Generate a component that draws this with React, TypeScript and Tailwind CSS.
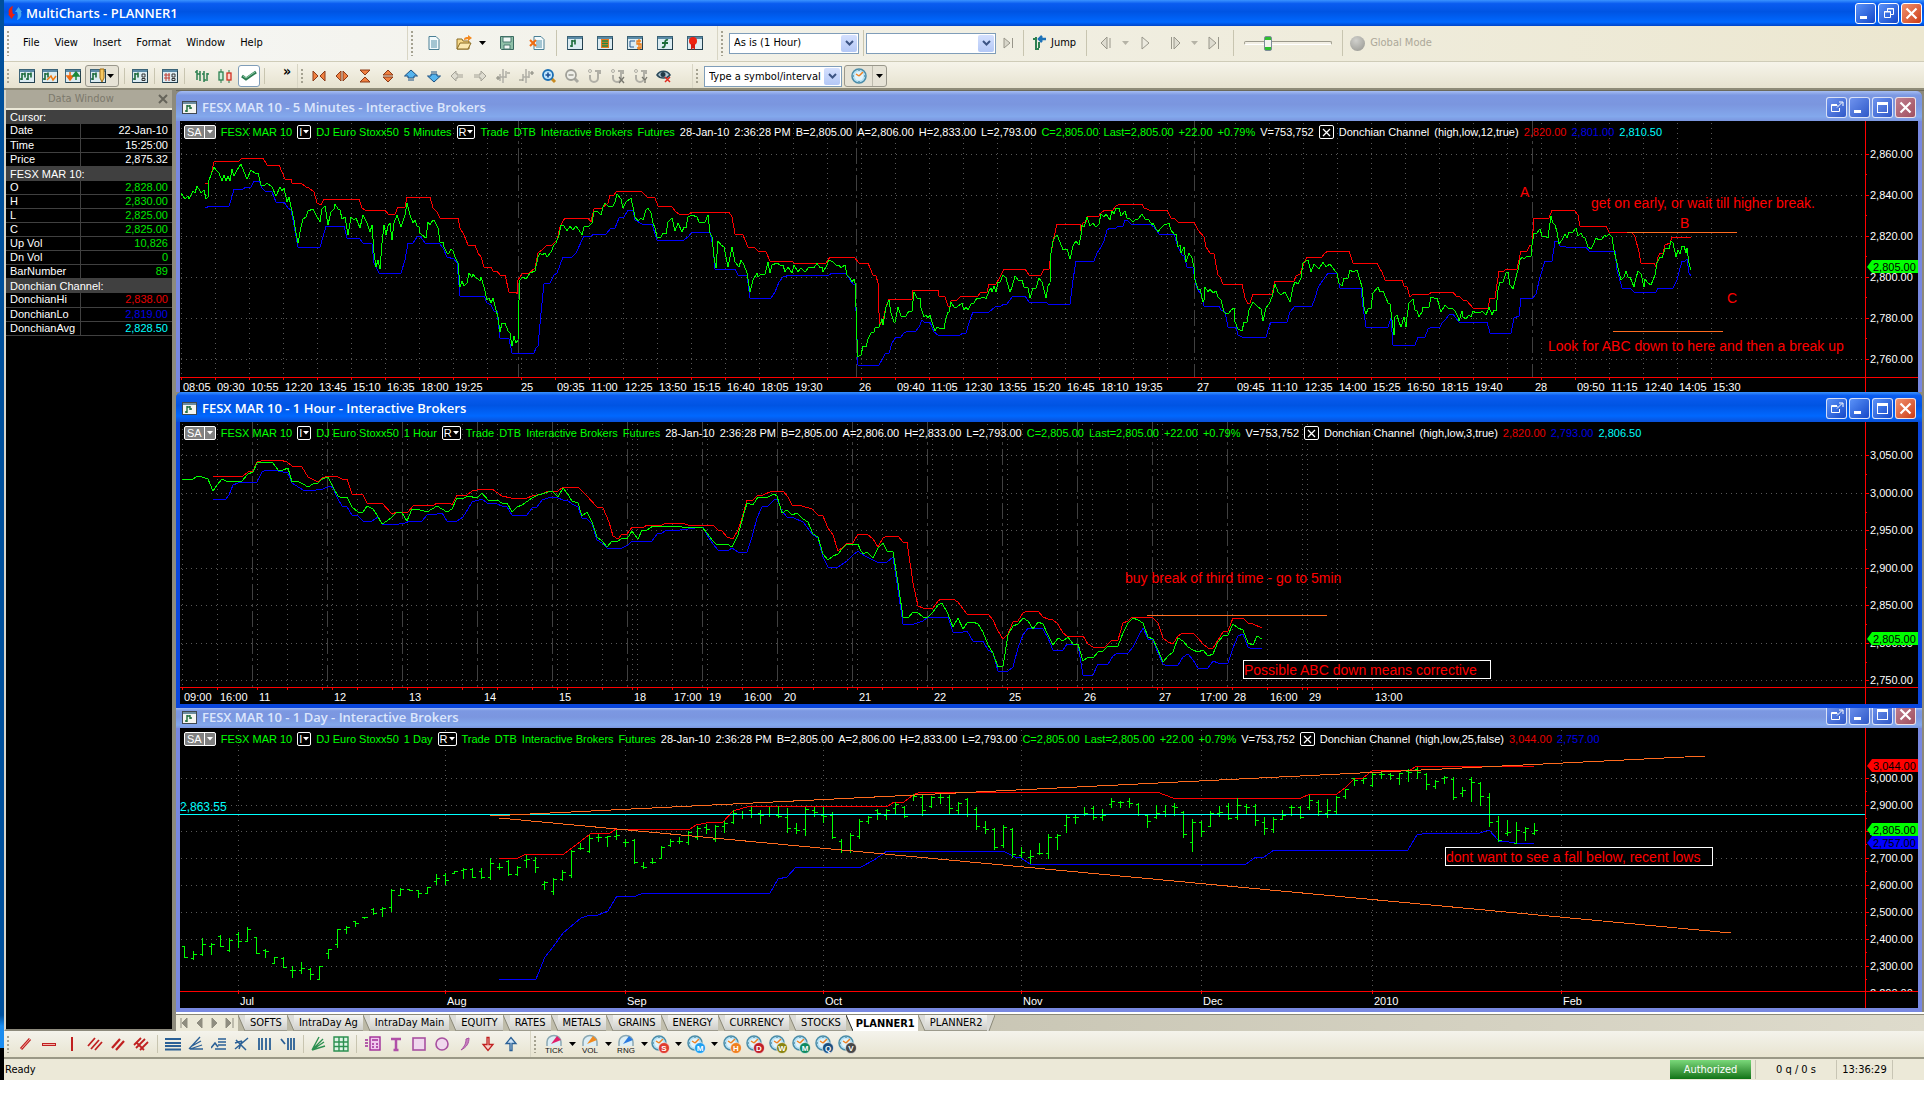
import { Fragment, type ReactNode } from 'react';

const GREEN = '#00ff00';
const RED = '#ff0000';
const BLUE = '#0000ff';
const ORANGE = '#ff6a1e';

/* ---------- chart data ---------- */

// A stretch of a line: origin, horizontal density and its points
type Piece = { x: number; y: number; k: number; pts: string };

const toPath = (pieces: Piece[]) =>
  pieces
    .flatMap((p) => p.pts.split(' ').map((s) => s.split(',').map(Number)).map(([px, py]) => `${Math.round(p.x + px / p.k)},${Math.round(py / 3 - p.y)}`))
    .join(' ');

const m5 = (a: string, b: string, c: string): Piece[] => [
  { x: 0, y: 1, k: 2.24, pts: a },
  { x: 670, y: 1, k: 2.8, pts: b },
  { x: 1200, y: 31, k: 2.882, pts: c },
];

const h1 = (a: string, b: string): Piece[] => [
  { x: 0, y: 32, k: 2.24, pts: a },
  { x: 680, y: 32, k: 2.8, pts: b },
];

const d1 = (a: string, b: string): Piece[] => [
  { x: 0, y: 28, k: 1.96, pts: a },
  { x: 780, y: 28, k: 1.6266, pts: b },
];

const fiveMin = {
  price: m5(
    '3,219 12,238 17,228 21,238 30,213 34,219 39,197 44,213 48,220 53,210 58,238 62,232 65,180 70,165 77,140 81,150 88,160 93,183 98,165 103,183 108,167 111,183 116,148 121,168 128,150 137,131 143,157 149,177 159,150 168,160 174,160 181,195 190,195 196,190 206,200 214,228 223,200 229,214 233,203 240,245 245,232 249,262 255,300 260,340 264,370 271,320 275,298 282,290 287,272 299,266 303,280 313,307 319,266 325,259 331,316 338,277 344,268 348,253 353,268 359,271 364,298 370,290 376,346 384,290 390,300 394,293 403,325 411,284 419,308 425,335 430,314 434,400 440,440 443,420 447,447 452,370 458,315 462,345 466,318 470,310 474,360 480,308 487,284 496,320 503,286 509,248 515,286 521,310 526,301 530,318 535,322 538,338 543,345 550,355 556,307 561,314 566,301 570,301 577,325 583,365 588,365 592,380 597,400 602,400 607,388 612,393 617,410 622,430 627,500 632,482 636,499 642,490 648,460 653,470 657,461 662,473 667,477 671,484 674,472 680,500 688,540 693,535 697,550 702,535 708,570 712,590 716,635 722,608 729,608 735,632 739,640 743,678 748,648 753,670 757,660 759,540 762,480 768,472 776,478 783,460 795,452 802,410 806,400 812,405 818,400 823,412 832,395 837,375 843,370 848,345 854,315 860,318 868,332 873,319 881,330 887,319 893,330 900,344 906,320 916,318 922,310 928,275 934,272 943,284 948,262 953,250 961,260 971,258 975,245 980,222 987,236 993,265 1000,245 1010,233 1015,260 1020,290 1027,302 1033,295 1038,300 1043,270 1048,265 1056,280 1060,310 1065,325 1069,350 1078,350 1083,340 1088,343 1093,305 1102,295 1109,332 1116,308 1124,337 1130,320 1134,325 1138,292 1147,284 1157,290 1162,307 1176,307 1182,284 1187,340 1191,350 1196,410 1200,443 1206,362 1212,375 1218,380 1227,442 1236,382 1243,425 1252,442 1256,420 1263,435 1269,460 1276,516 1283,480 1292,460 1295,470 1300,466 1310,462 1317,425 1322,460 1327,436 1338,430 1344,436 1350,435 1356,455 1363,440 1370,460 1375,436 1385,455 1392,445 1401,455 1408,442 1420,443 1427,430 1434,445 1438,440 1441,455 1448,440 1454,420 1463,425 1470,436 1476,436 1480,443 1490,435 1495,465 1500,475 1505,485 1509,478',
    '15,490 18,560 19,660 22,712 27,706 32,706 37,677 45,680 50,658 60,640 67,637 71,623 82,620 89,598 93,615 100,562 110,540 115,580 122,606 127,606 134,562 143,588 158,588 165,572 173,574 178,517 188,535 196,535 200,565 206,590 213,585 218,595 223,585 228,597 237,632 243,622 250,625 262,627 268,595 273,575 278,577 284,545 290,562 300,562 313,548 318,570 325,560 330,570 340,552 348,548 355,535 363,538 370,530 376,532 381,538 388,512 395,505 398,515 404,497 410,515 413,485 420,485 429,466 437,475 447,516 453,500 463,467 472,482 481,480 488,500 497,505 505,535 513,505 522,505 530,473 538,485 548,535 555,497 560,490 563,400 567,362 573,352 580,345 588,365 597,390 608,388 615,418 623,378 632,362 641,375 646,345 650,315 656,322 664,292 672,318 680,308 688,320 697,313 704,283 711,292 716,283 727,300 734,272 740,283 746,265 754,265 760,288 771,272 776,295 785,298 793,307 802,297 807,297 818,283 826,298 838,300 845,315 849,308 855,322 862,335 870,323 880,316 888,313 894,308 900,330 906,343 912,342 918,380 923,375 928,398 934,380 940,425 950,400 957,413 963,440 967,480 975,508 980,508 987,545 990,540 994,500 1003,515 1008,508 1015,520 1025,513 1030,532 1038,540 1047,575 1053,583 1060,580 1066,570 1074,565 1078,605 1086,628 1097,633 1103,607 1112,605 1117,570 1128,545 1135,553 1142,562 1150,568 1157,602 1165,563 1173,552 1182,532 1190,492 1197,515 1207,525 1218,515 1231,545 1240,500 1246,485 1254,493 1264,475 1269,430 1281,420 1292,455 1300,433 1312,448 1324,425 1333,440 1344,433 1358,452 1363,458 1370,490 1377,499 1384,475 1393,475 1399,450 1408,455 1420,450 1428,480 1434,500 1439,560 1444,582 1450,568 1458,565 1465,520 1477,500 1483,517 1493,513 1500,535 1506,550 1512,552 1517,600 1522,645 1527,590 1532,585 1538,605 1543,622 1550,590 1557,622 1560,590',
    '85,640 90,632 96,626 101,660 107,662 113,680 120,665 125,650 142,650 148,620 157,625 163,625 170,645 177,665 187,645 197,655 208,655 217,662 225,680 229,692 235,662 240,680 247,687 256,675 262,680 268,662 278,668 290,667 295,662 305,674 312,660 314,652 322,675 328,660 333,664 340,600 346,575 355,575 362,548 368,545 374,585 384,597 392,560 399,540 404,510 410,502 416,508 420,500 427,497 434,497 439,465 443,428 453,430 460,416 467,438 478,440 484,445 491,400 494,378 498,400 504,405 510,425 517,462 525,450 532,432 540,445 545,427 552,430 557,425 564,415 572,437 580,428 586,440 592,445 600,470 608,478 615,465 622,443 632,450 640,447 648,435 652,440 660,433 668,440 675,480 682,520 690,545 696,570 703,562 708,543 716,562 721,562 731,590 737,565 744,543 752,552 760,590 765,568 773,578 782,585 792,555 799,520 806,500 812,503 820,478 826,475 832,478 840,452 845,460 852,502 858,480 865,493 870,467 876,467 882,488 886,475 890,520 895,540'
  ),
  high: m5(
    '57,190 63,190 70,165 77,125 133,124 138,115 187,115 195,136 222,136 235,177 248,178 252,190 272,190 283,202 290,203 300,215 306,250 316,254 322,238 402,238 408,265 414,271 459,271 467,283 482,283 488,260 503,260 509,232 561,232 567,265 575,275 582,295 622,295 628,325 636,345 645,376 661,376 668,400 675,412 681,442 697,442 702,453 710,454 716,465 728,466 738,517 752,517 755,522 757,480 765,462 781,460 795,443 803,400 811,390 822,376 834,375 845,360 852,320 855,308 863,295 913,295 920,307 927,267 945,265 958,250 963,225 973,226 980,214 1033,214 1047,232 1064,233 1071,258 1102,260 1110,275 1117,283 1140,283 1147,277 1230,277 1236,290 1244,343 1262,345 1273,380 1287,383 1294,394 1312,395 1321,424 1370,424 1376,430 1447,430 1456,412 1500,412',
    '12,412 25,430 51,430 65,466 73,467 78,490 80,580 83,615 92,600 100,560 109,536 173,536 177,511 245,511 250,529 265,530 273,558 281,558 284,542 300,541 312,529 357,529 368,517 383,516 390,493 409,493 420,472 430,448 491,448 500,466 536,466 542,448 557,448 562,400 570,350 580,313 643,313 648,332 653,310 660,305 666,289 698,289 705,277 715,271 735,271 744,258 755,253 817,253 822,265 832,266 837,271 888,271 898,295 910,296 917,307 963,307 975,330 990,352 998,382 1008,400 1018,402 1030,466 1036,470 1045,493 1097,493 1106,535 1114,552 1120,550 1129,523 1182,523 1190,484 1243,484 1250,467 1260,463 1270,430 1280,412 1321,412 1328,402 1337,394 1398,394 1408,430 1476,430',
    '0,538 6,545 14,569 62,569 70,588 77,592 86,620 95,613 142,613 150,607 211,607 220,618 228,619 240,631 252,632 268,655 310,656 318,625 331,625 344,544 357,544 362,538 396,538 405,484 425,483 432,466 438,466 443,385 488,385 496,361 560,361 570,375 577,407 650,409 661,427 727,427 736,440 747,485 753,520 790,520 795,532 802,500 808,490 815,488 822,465 835,460 841,440 895,440'
  ),
  low: m5(
    '57,265 67,259 109,259 115,240 121,208 141,208 147,202 160,202 166,184 177,184 184,205 190,214 206,215 214,247 234,247 243,265 249,270 256,315 264,382 313,382 320,350 328,319 367,319 375,355 401,355 409,370 429,371 435,430 446,460 496,460 503,420 510,370 522,370 531,352 538,349 549,370 580,370 590,385 597,410 613,417 621,430 627,529 680,529 688,548 697,556 704,572 711,573 717,655 738,658 743,700 792,700 797,685 803,678 808,580 815,493 829,490 837,465 845,460 858,412 877,411 888,400 906,349 921,349 928,343 955,343 965,325 974,323 984,295 994,292 1003,271 1015,271 1020,300 1034,313 1058,313 1069,361 1129,361 1138,350 1147,337 1187,337 1193,380 1199,448 1243,448 1250,464 1269,467 1276,535 1324,535 1333,515 1341,485 1351,472 1366,466 1453,466 1460,460 1491,460 1500,480 1507,492',
    '15,493 21,736 82,736 90,720 97,702 109,700 118,670 128,652 144,652 150,640 162,634 185,634 193,622 201,601 208,607 225,607 235,635 245,646 307,646 315,638 324,638 335,600 344,577 390,577 405,560 423,559 431,553 440,552 455,529 491,529 501,547 548,547 555,553 615,553 625,480 632,424 684,424 692,400 704,380 712,362 720,330 727,325 744,325 750,319 763,318 771,300 778,302 788,313 841,313 851,322 866,343 908,343 918,380 930,405 936,407 944,440 960,443 968,495 975,510 982,522 990,559 1033,559 1040,570 1050,575 1058,622 1080,622 1087,645 1098,652 1164,652 1172,620 1180,607 1223,607 1232,575 1246,559 1294,559 1303,535 1310,505 1320,490 1337,460 1363,460 1372,505 1432,505 1437,560 1444,622 1480,622',
    '0,712 22,712 33,685 38,766 102,766 110,742 130,742 137,718 150,712 172,712 180,700 190,688 200,674 210,673 217,680 228,697 308,697 316,730 378,730 385,685 402,678 407,625 440,625 450,612 462,560 475,514 495,512 505,452 512,452 520,468 535,472 595,472 603,484 677,484 684,540 690,560 698,595 723,596 731,607 794,607 800,595 845,595 855,570 863,545 870,514 880,514 886,508 891,550 895,557'
  ),
};

const hourly = {
  price: h1(
    '5,268 20,268 25,271 40,259 50,260 62,268 73,304 84,285 95,268 107,277 118,274 140,274 152,253 163,245 173,220 184,215 208,218 219,241 231,241 241,235 252,275 263,272 275,283 286,290 297,283 308,278 319,268 331,261 342,292 353,319 364,325 375,322 386,352 398,367 409,367 420,349 432,358 442,376 453,401 464,394 475,380 487,367 498,368 509,392 520,358 531,358 554,367 576,349 598,366 610,356 621,325 632,326 644,319 666,325 677,310 689,329 710,331 721,340 733,340 744,367 755,350 767,345 789,323 801,316 812,313 824,305 834,304 846,320 857,295 868,310 879,334 891,340 901,377 912,366 924,395 935,440 946,454 957,470 968,453 979,457 991,445 1002,447 1013,422 1025,448 1036,421 1047,420 1059,409 1080,411 1091,409 1125,411 1170,411 1181,430 1192,451 1203,466 1215,463 1226,463 1237,470 1249,435 1260,380 1271,340 1283,345 1294,322 1316,322 1330,313 1338,319 1349,369 1360,360 1372,376 1383,370 1395,387 1406,397 1418,433 1429,440 1440,493 1451,509 1462,499 1473,492 1484,478 1495,463 1508,466 1518,463',
    '0,478 7,492 20,487 35,504 50,475 63,458 76,484 91,485 105,580 119,680 133,683 147,665 160,667 175,682 189,682 203,665 217,646 230,640 245,672 259,710 273,683 287,718 300,700 315,695 329,702 343,725 357,765 371,790 385,832 399,828 413,735 427,707 441,703 456,683 470,692 484,716 498,697 511,702 525,735 539,764 553,745 567,754 581,740 595,762 609,763 623,813 637,802 651,805 665,787 680,782 694,769 721,769 735,730 750,700 765,683 779,690 791,700 805,740 819,748 833,780 847,817 861,797 875,787 889,745 903,752 917,770 931,780 945,785 959,780 973,799 987,793 1001,755 1015,738 1029,736 1043,702 1057,715 1071,719 1085,759 1099,764 1112,738 1126,746'
  ),
  high: h1(
    '73,257 80,259 141,259 152,245 163,242 173,217 190,211 225,211 240,216 252,229 274,232 286,261 308,277 319,265 331,259 355,260 364,268 375,268 386,313 409,314 420,340 453,340 475,371 487,367 510,367 525,346 568,346 575,340 605,340 610,346 621,316 642,316 655,304 677,298 698,298 721,317 741,325 778,324 789,317 812,313 824,304 846,304 857,292 891,292 912,318 935,350 947,353 960,395 969,437 981,447 991,433 1002,433 1013,411 1040,411 1047,406 1080,406 1088,400 1125,400 1145,409 1193,406 1204,421 1215,424 1226,442 1238,448 1249,420 1260,375 1271,331 1283,330 1294,316 1305,316 1327,304 1350,304 1361,322 1372,346 1393,349 1415,358 1429,374 1440,378 1451,415 1462,435 1473,484 1484,475 1495,460 1507,460 1518,433',
    '0,433 20,433 35,448 50,472 63,443 76,438 105,438 119,455 132,457 147,580 162,648 175,655 203,655 217,632 228,628 259,628 273,636 300,673 357,673 371,690 385,722 399,747 413,732 427,695 441,694 455,670 467,664 497,664 511,682 525,688 540,689 553,702 567,730 580,737 623,737 637,763 651,772 685,772 706,751 721,751 735,698 750,692 762,680 800,680 820,685 833,700 847,745 861,757 875,763 889,737 903,730 931,730 945,745 959,762 975,775 987,775 1001,750 1015,725 1029,722 1043,685 1071,685 1085,700 1100,703 1126,714'
  ),
  low: h1(
    '73,328 102,328 109,316 118,286 129,280 173,276 184,246 193,241 208,241 241,249 252,280 275,301 305,301 320,296 335,287 342,293 353,328 364,349 375,350 386,376 398,378 409,394 431,394 443,382 453,403 490,403 504,399 515,394 543,394 555,373 575,373 587,368 598,394 621,394 633,380 644,358 655,335 677,328 688,340 711,341 721,347 733,350 744,376 778,376 789,353 800,352 812,331 824,325 834,322 846,324 857,331 868,331 879,342 891,350 901,385 912,388 924,403 935,451 946,460 957,475 991,475 1003,464 1013,454 1058,454 1069,431 1080,430 1092,421 1120,421 1137,416 1171,412 1181,435 1193,463 1204,481 1228,482 1237,475 1249,487 1271,487 1282,440 1293,383 1304,352 1316,349 1330,331 1338,328 1349,364 1360,380 1372,382 1395,395 1418,436 1429,445 1440,500 1451,532 1473,532 1495,512 1507,496 1518,484',
    '0,490 20,502 48,517 76,517 91,500 105,600 119,703 150,703 175,692 189,682 245,682 259,727 287,727 300,722 315,754 343,754 357,780 371,790 385,844 413,844 427,830 441,775 455,735 470,715 511,718 525,745 539,781 567,781 580,763 609,766 623,856 651,856 665,823 694,823 708,798 721,790 750,790 765,770 779,740 791,715 805,748 819,750 833,790 847,823 854,826 889,826 903,800 917,792 931,810 945,835 973,835 987,814 1001,820 1029,820 1043,775 1057,738 1071,731 1085,770 1092,775 1126,775'
  ),
};

const daily = {
  high: d1(
    '626,475 662,475 679,463 752,463 768,445 803,403 842,400 855,388 1000,388 1012,376 1030,370 1065,366 1083,332 1118,319 1388,319 1400,307 1420,306 1437,284 1450,277 1528,277',
    '0,277 320,277 347,295 555,295 569,283 613,283 627,265 641,237 656,234 671,211 732,211 744,199 934,199'
  ),
  low: d1(
    '626,838 697,838 715,770 732,740 750,698 785,653 803,646 820,646 838,632 856,589 893,588 908,580 1156,580 1173,538 1190,530 1208,502 1334,502 1360,480 1386,454 1528,454',
    '0,454 70,454 90,470 100,475 114,493 466,493 482,472 495,470 510,451 729,451 744,406 760,400 846,400 861,391 876,424 893,425 903,430 934,430'
  ),
};

// high,low,open,close for each day
const dailyBars =
  '738,770,738,770 752,776,774,762 714,764,762,733 728,762,738,731 706,737,707,737 714,752,751,721 697,740,703,724 682,724,724,686 711,760,712,759 747,770,750,752 770,788,788,772 772,802,773,802 798,832,809,809 786,820,811,804 805,837,806,821 797,838,837,799 747,773,760,748 686,740,733,688 678,698,686,680 664,677,664,668 651,653,652,652 625,643,626,640 622,647,628,623 568,633,622,571 564,586,586,566 568,570,568,569 570,590,571,578 561,580,580,562 521,553,544,535 520,551,524,540 513,520,519,514 505,534,510,506 505,532,506,530 503,533,513,530 475,538,532,490 488,506,500,500 480,524,482,522 498,524,522,500 465,502,480,478 472,515,479,500 543,566,553,545 535,581,572,538 511,541,538,515 450,530,526,452 430,447,445,443 404,455,454,415 403,424,412,412 408,437,411,409 390,416,408,404 418,438,425,427 418,488,420,487 487,503,498,500 473,490,485,485 438,475,474,440 418,438,434,423 411,429,424,424 393,432,427,397 377,416,410,385 372,398,381,386 375,422,418,377 362,396,378,368 330,370,367,338 333,353,342,342 322,350,330,343 330,370,338,345 320,347,341,343 318,350,345,347 325,395,352,384 370,400,384,390 320,405,387,328 322,347,330,335 320,366,345,347 336,413,346,411 418,455,424,451 400,455,450,406 358,413,408,364 348,370,363,352 327,357,330,340 326,356,345,330 306,340,325,312 318,352,322,348 282,300,284,288 283,345,290,330 288,322,318,290 280,308,292,290 286,342,292,325 305,342,330,308 295,347,298,342 320,387,328,378 362,398,380,388 383,446,388,442 375,442,436,381 383,470,388,463 440,472,465,455 450,490,470,468 430,462,458,460 402,474,460,410 401,447,411,405 343,397,376,350 343,370,352,350 320,346,342,340 318,357,323,352 328,360,352,345 294,320,312,302 303,320,305,306 294,320,302,308 310,345,312,343 343,380,345,363 316,353,352,340 316,348,332,342 310,345,318,322 333,412,337,403 358,453,427,365 362,408,366,392 333,378,378,340 318,348,340,337 308,357,318,355 295,356,350,316 312,340,318,322 312,374,318,361 350,402,366,383 350,396,386,357 330,358,356,345 314,344,320,322 318,353,322,350 284,328,322,300 300,345,305,332 296,350,338,330 287,342,332,290 266,294,288,268 233,255,235,240 233,250,240,235 215,257,254,222 212,234,222,222 218,238,222,226 218,253,233,220 208,243,212,215 200,233,208,215 218,268,222,253 240,265,258,243 228,248,233,232 230,297,236,290 262,287,278,270 230,302,236,245 247,315,250,289 278,378,290,367 348,423,362,420 360,404,400,395 366,430,429,390 382,420,397,385 370,402,400,390'.split(' ').map((b) => b.split(',').map((v) => Math.round(Number(v) / 3 - 28)));

type Label = [number, string];

const run = (start: number, count: number, step = 34) => Array.from({ length: count }, (_, i) => start + i * step);

const fiveMinLabels: Label[] = [
  ...['08:05', '09:30', '10:55', '12:20', '13:45', '15:10', '16:35', '18:00', '19:25'].map((t, i): Label => [1 + i * 34, t]),
  [339, '25'],
  ...['09:35', '11:00', '12:25', '13:50', '15:15', '16:40', '18:05', '19:30'].map((t, i): Label => [375 + i * 34, t]),
  [677, '26'],
  ...['09:40', '11:05', '12:30', '13:55', '15:20', '16:45', '18:10', '19:35'].map((t, i): Label => [715 + i * 34, t]),
  [1015, '27'],
  ...['09:45', '11:10', '12:35', '14:00', '15:25', '16:50', '18:15', '19:40'].map((t, i): Label => [1055 + i * 34, t]),
  [1353, '28'],
  ...['09:50', '11:15', '12:40', '14:05', '15:30'].map((t, i): Label => [1395 + i * 34, t]),
];

const hourLabels: Label[] = [
  [2, '09:00'], [38, '16:00'], [77, '11'], [152, '12'], [227, '13'], [302, '14'], [377, '15'], [452, '18'], [492, '17:00'], [527, '19'],
  [562, '16:00'], [602, '20'], [677, '21'], [752, '22'], [827, '25'], [902, '26'], [977, '27'], [1018, '17:00'], [1052, '28'],
  [1088, '16:00'], [1127, '29'], [1193, '13:00'],
];

const dayLabels: Label[] = [[58, 'Jul'], [265, 'Aug'], [445, 'Sep'], [643, 'Oct'], [841, 'Nov'], [1021, 'Dec'], [1192, '2010'], [1381, 'Feb']];

/* ---------- chart windows ---------- */

type PaneProps = {
  height: number;
  axis: number;
  vertical: number[];
  sessions?: number[];
  horizontal: number[];
  labels: Label[];
  children: ReactNode;
};

function Plot({ height, axis, vertical, sessions = [], horizontal, labels, children }: PaneProps) {
  return (
    <svg className="block min-w-0 flex-1" width="100%" height={height} fontFamily="'Liberation Sans', Arial, sans-serif" fontSize="11">
      <g shapeRendering="crispEdges" fill="none">
        {vertical.map((x) => (
          <line key={x} x1={x + 0.5} x2={x + 0.5} y1="2" y2={axis} stroke="#585858" strokeDasharray="1 4" />
        ))}
        {horizontal.map((y) => (
          <line key={y} x1="1" x2="100%" y1={y + 0.5} y2={y + 0.5} stroke="#585858" strokeDasharray="1 4" />
        ))}
        {sessions.map((x) => (
          <line key={x} x1={x + 0.5} x2={x + 0.5} y1="0" y2={axis} stroke="#404040" strokeDasharray="16 4 3 4" />
        ))}
        {children}
        <line x1="0" x2="100%" y1={axis + 0.5} y2={axis + 0.5} stroke={RED} />
        {vertical.map((x) => (
          <line key={x} x1={x + 0.5} x2={x + 0.5} y1={axis} y2={axis + 3} stroke={RED} />
        ))}
      </g>
      {labels.map(([x, t]) => (
        <text key={x} x={x + 2} y={axis + 14} fill="#fff">{t}</text>
      ))}
    </svg>
  );
}

type Tag = { y: number; value: string; color: string };

function PriceScale({ height, axis, prices, tags }: { height: number; axis: number; prices: Label[]; tags: Tag[] }) {
  const step = prices[1][0] - prices[0][0];
  return (
    <svg className="block shrink-0" width="53" height={height} fontFamily="'Liberation Sans', Arial, sans-serif" fontSize="11">
      <g shapeRendering="crispEdges" stroke={RED}>
        <line x1="0.5" x2="0.5" y1="0" y2={height} />
        {prices.map(([y]) => (
          <Fragment key={y}>
            <line x1="0" x2="4" y1={y + 0.5} y2={y + 0.5} />
            <line x1="0" x2="2" y1={y + step / 2} y2={y + step / 2} />
          </Fragment>
        ))}
      </g>
      {prices.map(([y, t]) => (
        <text key={t} x="5" y={y + 4} fill="#fff">{t}</text>
      ))}
      <rect x="1" y={axis} width="52" height={height - axis} fill="#000" />
      <line x1="0" x2="53" y1={axis + 0.5} y2={axis + 0.5} stroke={RED} shapeRendering="crispEdges" />
      {tags.map((tag) => (
        <g key={tag.value}>
          <polygon points={`2,${tag.y} 7,${tag.y - 7} 53,${tag.y - 7} 53,${tag.y + 6} 7,${tag.y + 6}`} fill={tag.color} />
          <text x="8" y={tag.y + 4} fill="#000">{tag.value}</text>
        </g>
      ))}
    </svg>
  );
}

function Lines({ price, high, low }: { price?: Piece[]; high: Piece[]; low: Piece[] }) {
  return (
    <>
      <polyline points={toPath(high)} stroke={RED} />
      <polyline points={toPath(low)} stroke={BLUE} />
      {price && <polyline points={toPath(price)} stroke={GREEN} />}
    </>
  );
}

function Note({ x, y, children }: { x: number; y: number; children: string }) {
  return <text x={x} y={y} fill={RED} fontSize="14">{children}</text>;
}

function PlotIcon() {
  return (
    <svg className="shrink-0" width="15" height="13" viewBox="0 0 15 13" aria-hidden="true">
      <rect x="0.5" y="0.5" width="14" height="12" fill="#f4f4f0" stroke="#404850" />
      <rect x="1" y="1" width="13" height="2" fill="#6c8ca0" />
      <path d="M5 4v7M3 10h2M5 5h3M8 4v4M8 7h2" stroke="#1b6b3a" strokeWidth="1.4" fill="none" />
    </svg>
  );
}

function WindowButtons({ active }: { active?: boolean }) {
  const blue = active ? 'from-[#5b92f8] to-[#1546c8]' : 'from-[#6f93ee] to-[#3058c8]';
  const red = active ? 'from-[#f0906c] to-[#cc3a10]' : 'from-[#c08090] to-[#a05060]';
  const box = 'flex h-[21px] w-[21px] items-center justify-center rounded-[3px] border border-white/80 bg-linear-to-br';
  return (
    <div className="flex gap-[2px]">
      <button aria-label="Detach" className={`${box} ${blue}`}>
        <svg width="14" height="12" viewBox="0 0 14 12" fill="none" stroke="#fff">
          <path d="M7 3.5H1.5v7h8V7M1.5 4.5h6" />
          <path d="M7 6.5l5-5M9 1h4v4" />
        </svg>
      </button>
      <button aria-label="Minimize" className={`${box} ${blue}`}>
        <span className="mt-2 mr-1 h-[3px] w-[7px] bg-white" />
      </button>
      <button aria-label="Maximize" className={`${box} ${blue}`}>
        <span className="h-[11px] w-[11px] border border-t-[3px] border-white" />
      </button>
      <button aria-label="Close" className={`${box} ${red}`}>
        <svg width="13" height="13" viewBox="0 0 13 13" stroke="#fff" strokeWidth="2.2"><path d="M1.5 1.5l10 10M11.5 1.5l-10 10" /></svg>
      </button>
    </div>
  );
}

function Pick({ label, filled }: { label: string; filled?: boolean }) {
  return (
    <button className={`flex h-[14px] items-center rounded-[2px] border border-white text-white ${filled ? 'bg-[#808080]' : 'bg-black'}`}>
      <span className={filled ? 'px-[2px]' : 'px-px'}>{label}</span>
      <span className={`flex h-full items-center ${filled ? 'border-l border-white px-[2px]' : 'pr-px'}`}>
        <svg width="6" height="4"><path d="M0 0h6L3 3.5z" fill="#fff" /></svg>
      </span>
    </button>
  );
}

type WindowProps = {
  resolution: string;
  params: string;
  values: [string, string][];
  active?: boolean;
  cut?: boolean;
  framed?: boolean;
  children: ReactNode;
};

function ChartWindow({ resolution, params, values, active, cut, framed, children }: WindowProps) {
  const bar = active
    ? 'bg-[linear-gradient(#3a93ff,#0a5cf0_12%,#0054e3_45%,#0068ff_80%,#0a50d8)]'
    : 'bg-[linear-gradient(#a5bdf2,#7c98e2_14%,#7b96df_45%,#83a8ec_85%,#7b96df)]';
  const frame = active ? 'border-[#0a46dc] bg-[#0a46dc]' : 'border-[#7888e0] bg-[#7888e0]';
  return (
    <section className={`rounded-t-md border-x-4 ${framed ? 'border-b-4' : ''} ${frame}`}>
      <header className={`-mx-1 flex justify-between pr-[6px] pl-[6px] ${bar} ${cut ? 'h-[20px] items-end overflow-hidden pb-[3px]' : 'h-[30px] items-center rounded-t-md pt-[2px]'}`}>
        <div className="flex items-center gap-[5px]">
          <PlotIcon />
          <h2 className={`font-['Open_Sans',sans-serif] text-[13px] leading-4 font-semibold ${active ? 'text-white' : 'text-[#dce6fc]'}`}>
            FESX MAR 10 - {resolution} - Interactive Brokers
          </h2>
        </div>
        <WindowButtons active={active} />
      </header>
      <div className="relative flex bg-black">
        {children}
        <div className="absolute top-1 left-1 flex h-[14px] items-center gap-[5px] text-[11px] leading-[14px] whitespace-nowrap text-white">
          <Pick label="SA" filled />
          <span className="text-[#00ff00]">FESX MAR 10</span>
          <Pick label="I" />
          <span className="text-[#00ff00]">DJ Euro Stoxx50</span>
          <span className="text-[#00ff00]">{resolution}</span>
          <Pick label="R" />
          <span className="text-[#00ff00]">Trade</span>
          <span className="text-[#00ff00]">DTB</span>
          <span className="text-[#00ff00]">Interactive Brokers</span>
          <span className="text-[#00ff00]">Futures</span>
          <span>28-Jan-10</span>
          <span>2:36:28 PM</span>
          <span>B=2,805.00</span>
          <span>A=2,806.00</span>
          <span>H=2,833.00</span>
          <span>L=2,793.00</span>
          <span className="text-[#00ff00]">C=2,805.00</span>
          <span className="text-[#00ff00]">Last=2,805.00</span>
          <span className="text-[#00ff00]">+22.00</span>
          <span className="text-[#00ff00]">+0.79%</span>
          <span>V=753,752</span>
          <button aria-label="Remove study" className="flex h-[14px] w-[15px] items-center justify-center rounded-[2px] border border-white bg-black">
            <svg width="9" height="9" stroke="#fff" strokeWidth="1.3"><path d="M1 1l7 7M8 1L1 8" /></svg>
          </button>
          <span>Donchian Channel</span>
          <span>{params}</span>
          {values.map(([v, color]) => (
            <span key={v} className={color}>{v}</span>
          ))}
        </div>
      </div>
    </section>
  );
}

/* ---------- toolbar pieces ---------- */

const Grip = () => <span className="mx-[3px] my-1 w-[2px] shrink-0 self-stretch bg-[radial-gradient(circle,#a5a291_1px,transparent_1px)] bg-[length:2px_4px]" />;
const Sep = () => <span className="my-1 w-px shrink-0 self-stretch bg-[#c8c5b0]" />;
const Arrow = ({ dim }: { dim?: boolean }) => (
  <svg className="shrink-0" width="7" height="4" aria-hidden="true"><path d="M0 0h7L3.500 4z" fill={dim ? '#b5b3a6' : '#000'} /></svg>
);

function Tool({ name, wide, children }: { name: string; wide?: boolean; children: ReactNode }) {
  return (
    <button aria-label={name} className={`flex h-[22px] shrink-0 items-center justify-center ${wide ? 'w-[30px]' : 'w-[23px]'}`}>
      <svg width="16" height="16" viewBox="0 0 16 16" fill="none">{children}</svg>
    </button>
  );
}

// Framed chart window used as the base of many toolbar icons
const Frame = ({ children }: { children?: ReactNode }) => (
  <>
    <rect x="0.500" y="1.500" width="15" height="13" fill="#dcecf2" stroke="#3c6478" />
    <path d="M1 3h14" stroke="#5a8aa6" strokeWidth="2" />
    <path d="M1 14.500h15M15.500 3v12" stroke="#23404e" />
    {children}
  </>
);

const Bars = ({ x = 3 }: { x?: number }) => <path d={`M${x + 1} 5v7M${x - 1} 11h2M${x + 1} 6h3M${x + 4} 4.500v5`} stroke="#1b6b3a" strokeWidth="1.600" />;
const Page = ({ x = 3 }: { x?: number }) => (
  <>
    <path d={`M${x} 1.500h7l3 3v10h-10z`} fill="#f2fafc" stroke="#4a7f95" />
    <path d={`M${x + 2} 6h6M${x + 2} 8h6M${x + 2} 10h6M${x + 2} 12h6`} stroke="#5590a8" />
  </>
);
const Clock = () => (
  <>
    <circle cx="8" cy="8" r="7" fill="#b4e0f4" stroke="#4a8ca8" strokeWidth="1.500" />
    <circle cx="8" cy="8" r="4.500" fill="#e2f4fb" />
    <path d="M8 8l4-4M8 8L5 6" stroke="#f08020" strokeWidth="1.500" />
    <path d="M8 2v1M8 13v1M2 8h1M13 8h1" stroke="#2a6a88" />
  </>
);
const Lens = ({ dim, sign }: { dim?: boolean; sign: string }) => (
  <>
    <path d="M10 10l4 4" stroke={dim ? '#a8a8a0' : '#c88a20'} strokeWidth="3" />
    <circle cx="7" cy="7" r="5" fill={dim ? '#eeeee8' : '#bfe6ff'} stroke={dim ? '#a0a098' : '#1c6fb4'} strokeWidth="1.800" />
    <path d={sign} stroke={dim ? '#a0a098' : '#1c4f94'} strokeWidth="1.600" />
  </>
);
const Hook = ({ mark = '' }: { mark?: string }) => (
  <>
    <path d="M3 7v3a4 4 0 0 0 8 0V4M8 3h5v3" stroke="#b0afa6" strokeWidth="2" />
    <circle cx="3" cy="3" r="1.500" stroke="#b0afa6" />
    <path d={mark} stroke="#77776e" strokeWidth="1.300" />
  </>
);
const Pan = ({ d }: { d: string }) => (
  <>
    <path d="M8 1v14M5 6v7M11 3v7M5 9h6" stroke="#b0afa6" strokeWidth="1.500" />
    <path d={d} stroke="#8a8a80" strokeWidth="1.200" />
  </>
);

function Badge({ letter, color, menu }: { letter: string; color: string; menu?: boolean }) {
  return (
    <button aria-label={`Interval ${letter}`} className={`flex shrink-0 items-center gap-[5px] ${menu ? 'w-[36px]' : 'w-[23px]'}`}>
      <svg width="19" height="19" viewBox="0 0 19 19" fill="none">
        <Clock />
        <circle cx="13" cy="13" r="5.500" fill={color} stroke="#fff" strokeWidth="0.600" />
        <text x="13" y="16" fontSize="8" fontWeight="700" fill="#fff" textAnchor="middle" fontFamily="'Liberation Sans', Arial, sans-serif">{letter}</text>
      </svg>
      {menu && <Arrow />}
    </button>
  );
}

function Gauge({ label, color }: { label: string; color: string }) {
  return (
    <button aria-label={label} className="flex w-[36px] shrink-0 items-center gap-1">
      <svg width="22" height="22" viewBox="0 0 22 22" fill="none">
        <path d="M4 13V9a7 6.500 0 0 1 14 0v4" fill="#dceef6" stroke="#8aa8b4" strokeWidth="1.500" />
        <path d="M8 11l6-8 4 4z" fill={color} />
        <text x="11" y="20" fontSize="8" fill="#111" textAnchor="middle" fontFamily="'Liberation Sans', Arial, sans-serif">{label}</text>
      </svg>
      <Arrow />
    </button>
  );
}

const DropArrow = () => (
  <span className="pointer-events-none flex h-full w-[16px] shrink-0 items-center justify-center rounded-[2px] bg-linear-to-b from-[#d4e0fe] to-[#b4c8f6]">
    <svg width="9" height="6"><path d="M1 1l3.500 3.500L8 1" fill="none" stroke="#3c5484" strokeWidth="2" /></svg>
  </span>
);

function MenuRow() {
  return (
    <div className="flex h-[36px] items-stretch border-b border-[#cfccb8] bg-linear-to-r from-[#f6f7f6] to-[#ece7d0] pb-px">
      <nav className="flex w-[404px] items-center border-r border-[#d8d5c4]">
        <Grip />
        <div className="flex items-center gap-[15px] pl-[11px]">
          {['File', 'View', 'Insert', 'Format', 'Window', 'Help'].map((m) => (
            <button key={m}>{m}</button>
          ))}
        </div>
      </nav>
      <div className="flex w-[310px] items-center border-r border-[#d8d5c4]">
        <Grip />
        <div className="flex items-center pl-[3px]">
          <Tool name="New" wide><Page /></Tool>
          <Tool name="Open" wide>
            <path d="M1 14V4h5l1 2h6v8z" fill="#f6d98a" stroke="#8a6a20" />
            <path d="M1 14l3-6h11l-3 6z" fill="#fbe9b0" stroke="#8a6a20" />
            <path d="M8 5c0-3 2-3 4-3V0l4 3-4 3V4" fill="#f48a20" />
          </Tool>
          <Arrow />
          <span className="w-[6px]" />
          <Tool name="Save" wide>
            <path d="M1.500 1.500h13v13h-12l-1-1z" fill="#8fc0a8" stroke="#3a6a60" />
            <path d="M4 2h8v5H4zM5 10h6v4H5z" fill="#f2f8f6" stroke="#4a7a70" />
          </Tool>
          <Tool name="Delete" wide><Page x={5} /><path d="M1 5l6 6M7 5l-6 6" stroke="#f06a10" strokeWidth="2" /></Tool>
        </div>
        <span className="w-[4px]" />
        <Sep />
        <div className="flex items-center pl-[3px]">
          <Tool name="Chart" wide><Frame><Bars x={4} /></Frame></Tool>
          <Tool name="Scanner" wide><Frame><rect x="4" y="4" width="8" height="9" fill="#e87a20" /><path d="M5 6h6M5 8.500h6M5 11h6" stroke="#1d8a40" strokeWidth="1.500" /></Frame></Tool>
          <Tool name="Trading" wide><Frame><path d="M3 6h5M3 6v6h4" stroke="#2a5a90" /><path d="M14 6h-4v3h4v4h-4M12 4v11" stroke="#f07a10" strokeWidth="1.300" /></Frame></Tool>
          <Tool name="Function" wide><Frame><path d="M11 5c-3-1-3 2-3 4s-1 4-3 3M5 8h6" stroke="#1b6b3a" strokeWidth="1.800" /></Frame></Tool>
          <Tool name="Signal" wide><Frame><circle cx="6" cy="6" r="4" fill="#ee2211" /><path d="M4 9v6l2-2 2 2V9z" fill="#d81a10" /></Frame></Tool>
        </div>
      </div>
      <div className="flex items-center">
        <Grip />
        <label className="ml-[3px] flex h-[21px] w-[130px] items-center border border-[#7f9db9] bg-white p-px">
          <select aria-label="Resolution" className="h-full min-w-0 flex-1 appearance-none bg-white pl-[3px]"><option>As is (1 Hour)</option></select>
          <DropArrow />
        </label>
        <span className="w-1" />
        <Sep />
        <label className="ml-[2px] flex h-[21px] w-[130px] items-center border border-[#7f9db9] bg-white p-px">
          <select aria-label="Date" className="h-full min-w-0 flex-1 appearance-none bg-white"><option></option></select>
          <DropArrow />
        </label>
        <Tool name="Go"><path d="M4 3l6 5-6 5zM12.500 3v10" fill="#d8d6ca" stroke="#98968a" /></Tool>
        <span className="w-[4px]" />
        <Sep />
        <button className="flex items-center gap-[4px] px-[7px]">
          <svg width="16" height="18" viewBox="0 0 16 18" fill="none"><path d="M5 3v13M2 5h3M5 15h3M8 8v6" stroke="#2c8050" strokeWidth="2" /><path d="M15 5h-6M11 2L8 5l3 3" stroke="#1d72b8" strokeWidth="2.500" /></svg>
          Jump
        </button>
        <span className="w-[3px]" />
        <Sep />
        <span className="w-[7px]" />
        <Tool name="Step back"><path d="M9 2v12L3 8zM12 3v10" fill="#dedcd0" stroke="#98968a" /></Tool>
        <span className="flex w-[17px] justify-center"><Arrow dim /></span>
        <Tool name="Play"><path d="M4 2v12l7-6z" fill="#eceadf" stroke="#98968a" /></Tool>
        <span className="w-[7px]" />
        <Tool name="Step forward"><path d="M3.500 2v12M6 2v12l6-6z" fill="#dedcd0" stroke="#98968a" /></Tool>
        <span className="flex w-[15px] justify-center"><Arrow dim /></span>
        <Tool name="To end"><path d="M3 2v12l7-6zM12.500 2v12" fill="#dedcd0" stroke="#98968a" /></Tool>
        <span className="w-[8px]" />
        <Sep />
        <input
          type="range"
          aria-label="Playback speed"
          defaultValue={24}
          className="mx-[10px] h-5 w-[88px] appearance-none bg-transparent [&::-webkit-slider-runnable-track]:h-[4px] [&::-webkit-slider-runnable-track]:rounded-sm [&::-webkit-slider-runnable-track]:border [&::-webkit-slider-runnable-track]:border-[#9c9a8c] [&::-webkit-slider-runnable-track]:border-b-white [&::-webkit-slider-runnable-track]:bg-[#f2efe4] [&::-webkit-slider-thumb]:-mt-[6px] [&::-webkit-slider-thumb]:h-[15px] [&::-webkit-slider-thumb]:w-[8px] [&::-webkit-slider-thumb]:appearance-none [&::-webkit-slider-thumb]:rounded-[2px] [&::-webkit-slider-thumb]:border [&::-webkit-slider-thumb]:border-[#7c8c98] [&::-webkit-slider-thumb]:bg-[linear-gradient(#2fbe2f_3px,#f3f3ee_3px,#f3f3ee_10px,#2fbe2f_10px)]"
        />
        <Sep />
        <button className="flex items-center gap-[5px] pl-[7px] text-[#aca899]">
          <span className="h-[15px] w-[15px] rounded-full bg-[radial-gradient(circle_at_40%_30%,#d0d0cc,#94948e)]" />
          Global Mode
        </button>
      </div>
    </div>
  );
}

function ChartRow() {
  return (
    <div className="flex h-[28px] items-stretch border-b-2 border-[#8e8b78] bg-linear-to-b from-[#f6f4ea] to-[#e6e2cf] pt-[2px]">
      <div className="flex w-[294px] items-center border-r border-[#d8d5c4]">
        <Grip />
        <span className="w-[3px]" />
        <Tool name="Bars"><Frame><Bars x={2} /><Bars x={8} /></Frame></Tool>
        <Tool name="Study"><Frame><Bars x={2} /><path d="M5 12l4-4 2 4 3-4" stroke="#f07a10" strokeWidth="1.500" /></Frame></Tool>
        <Tool name="Signals"><Frame><path d="M5 4v6M2 8l3 4 3-4z" stroke="#f06a10" fill="#f06a10" strokeWidth="1.500" /><path d="M11 12V6M8 8l3-4 3 4z" stroke="#1b8a3a" fill="#1b8a3a" strokeWidth="1.500" /></Frame></Tool>
        <button aria-label="Draw mode" className="mr-[2px] ml-px flex h-[22px] w-[34px] items-center justify-between rounded-[3px] border border-[#9a988c] bg-[#e6e3d6] px-[4px]">
          <svg width="16" height="16" viewBox="0 0 16 16" fill="none"><Frame><Bars x={2} /><path d="M10 1h4v9l-2 4-2-4z" fill="#f6c860" stroke="#a06a10" /></Frame></svg>
          <Arrow />
        </button>
        <span className="w-[3px]" />
        <Sep />
        <span className="w-[3px]" />
        <Tool name="Format"><Frame><Bars x={2} /><path d="M10 6h3v3h-3zM10 10.500h3v2h-3z" stroke="#333" /></Frame></Tool>
        <span className="w-[3px]" />
        <Sep />
        <span className="w-[3px]" />
        <Tool name="Grid settings"><Frame><path d="M2 7h6M2 10h6M4 5v8M7 5v8" stroke="#c03a30" /><path d="M10 6h3v3h-3zM10 10.500h3v2h-3z" stroke="#333" /></Frame></Tool>
        <span className="w-[3px]" />
        <Sep />
        <span className="w-[5px]" />
        <Tool name="OHLC"><path d="M3 2v10M1 4h2M3 6h3M6 3v10M10 3v11M8 6h2M10 12h2M13 5v8M13 6h2" stroke="#2c8050" strokeWidth="1.500" /></Tool>
        <Tool name="Candles"><path d="M4 1v14M12 2v13" stroke="#2c8050" /><rect x="2" y="4" width="4" height="8" fill="#cdeedb" stroke="#2c8050" strokeWidth="1.300" /><rect x="10" y="5" width="4" height="7" fill="#ffd0cc" stroke="#d03020" strokeWidth="1.300" /></Tool>
        <button aria-label="Line on close" className="ml-[2px] flex h-[22px] w-[22px] items-center justify-center rounded-[3px] border border-[#7f9db9] bg-white">
          <svg width="16" height="16" viewBox="0 0 16 16" fill="none"><path d="M1 8l4 3 10-7" stroke="#2c7a50" strokeWidth="3" /><path d="M2 8l3 2 9-6" stroke="#8fd0a8" /></svg>
        </button>
        <span className="w-[4px]" />
        <Sep />
        <button aria-label="More buttons" className="self-start pl-[18px] text-[14px] leading-[14px] font-bold">»</button>
      </div>
      <div className="flex w-[395px] items-center border-r border-[#d8d5c4]">
        <Grip />
        <span className="w-px" />
        <Tool name="Narrow bars"><path d="M2 3v10l5-5zM14 3v10L9 8z" fill="#f08040" stroke="#8a3a18" /></Tool>
        <Tool name="Widen bars"><path d="M7 3v10L2 8zM9 3v10l5-5z" fill="#f08040" stroke="#8a3a18" /></Tool>
        <Tool name="Compress"><path d="M3 2h10L8 7zM3 14h10L8 9z" fill="#f08040" stroke="#8a3a18" /></Tool>
        <Tool name="Expand"><path d="M3 7h10L8 2zM3 9h10l-5 5z" fill="#f08040" stroke="#8a3a18" /></Tool>
        <Tool name="Shift up"><path d="M1.500 8L8 2l6.500 6H11v2H5V8zM5 12h6" fill="#55b4ee" stroke="#1c4f80" /></Tool>
        <Tool name="Shift down"><path d="M1.500 8L8 14l6.500-6H11V6H5v2zM5 4h6" fill="#55b4ee" stroke="#1c4f80" /></Tool>
        <Tool name="Scroll left"><path d="M7 3L2 8l5 5v-3h2V6H7zM11 6v4M13 6v4" fill="#dedcd0" stroke="#a3a196" /></Tool>
        <Tool name="Scroll right"><path d="M9 3l5 5-5 5v-3H7V6h2zM5 6v4M3 6v4" fill="#dedcd0" stroke="#a3a196" /></Tool>
        <Tool name="Space wider"><Pan d="M1 10h4M3 8v4M12 5h3" /></Tool>
        <Tool name="Space narrower"><Pan d="M1 12h4M12 5h4M14 3v4" /></Tool>
        <Tool name="Zoom in"><Lens sign="M4.500 7h5M7 4.500v5" /></Tool>
        <Tool name="Zoom out"><Lens dim sign="M4.500 7h5" /></Tool>
        <Tool name="Undo zoom"><Hook /></Tool>
        <Tool name="Undo zoom X"><Hook mark="M9 9l5 6M14 9l-5 6" /></Tool>
        <Tool name="Undo zoom Y"><Hook mark="M9 9l3 3 2-3M12 12v3" /></Tool>
        <Tool name="Hide"><path d="M1 7c3-5 10-5 13 0-3 4-10 4-13 0z" fill="#b0c8d4" stroke="#2c4a5a" strokeWidth="1.500" /><circle cx="7" cy="6.500" r="2.500" fill="#223a48" /><path d="M9 9l5 5M14 9l-5 5" stroke="#e02a20" strokeWidth="1.500" /></Tool>
      </div>
      <div className="flex items-center">
        <Grip />
        <label className="ml-[3px] flex h-[21px] w-[138px] items-center border border-[#7f9db9] bg-white p-px">
          <input aria-label="Symbol or interval" defaultValue="Type a symbol/interval" className="h-full min-w-0 flex-1 bg-white pl-[3px]" />
          <DropArrow />
        </label>
        <button aria-label="Interval" className="ml-[2px] flex h-[22px] w-[43px] items-center rounded-[3px] border border-[#9a988c] bg-[#e6e3d6]">
          <span className="flex flex-1 justify-center"><svg width="16" height="16" viewBox="0 0 16 16" fill="none"><Clock /></svg></span>
          <span className="flex h-full w-[14px] items-center justify-center border-l border-[#bdbbae]"><Arrow /></span>
        </button>
      </div>
    </div>
  );
}

function DrawingRow() {
  return (
    <div className="flex h-[28px] items-stretch border-b-2 border-[#9a9886] bg-linear-to-b from-[#f4f3ec] to-[#e8e4d0]">
      <div className="flex w-[527px] items-center border-r border-[#d8d5c4]">
        <Grip />
        <span className="w-[2px]" />
        <Tool name="Trend line"><path d="M3 13L12 3" stroke="#c02020" strokeWidth="3" /><path d="M3.500 12.500L12 3" stroke="#f4b0a8" /></Tool>
        <Tool name="Horizontal line"><path d="M1 8.500h14" stroke="#c02020" strokeWidth="3" /><path d="M2 8.500h12" stroke="#f4b0a8" /></Tool>
        <Tool name="Vertical line"><path d="M8 1v14" stroke="#c02020" strokeWidth="2" /></Tool>
        <Tool name="Parallel lines"><path d="M1 10l7-8M4 13l8-9M8 14l7-8" stroke="#c02020" strokeWidth="1.800" /></Tool>
        <Tool name="Channel"><path d="M2 12l8-9M6 14l8-9" stroke="#c02020" strokeWidth="2.200" /></Tool>
        <Tool name="Pitchfork"><path d="M1 9l7-7M3 12l9-9M7 14l8-8M4 7l7 7" stroke="#c02020" strokeWidth="1.800" /></Tool>
        <span className="w-[5px]" />
        <Sep />
        <span className="w-[3px]" />
        <Tool name="Fibonacci retracement"><path d="M0 3h16M0 7h16M0 10h16M0 13.500h16" stroke="#2a6096" strokeWidth="1.800" /></Tool>
        <Tool name="Fibonacci fan"><path d="M1 13L12 1M2 13h13M2 13l12-4M4 10l9-5" stroke="#2a6096" strokeWidth="1.300" /></Tool>
        <Tool name="Fibonacci extension"><path d="M0 12l4-5 3 4M7 3h8M7 6h8M7 9h8M4 13h11" stroke="#2a6096" strokeWidth="1.600" /></Tool>
        <Tool name="Speed lines"><path d="M1 13L14 2M2 4l10 10M1 7l7-2M5 13l3-8" stroke="#2a6096" strokeWidth="1.500" /></Tool>
        <Tool name="Time zones"><path d="M2 2v12M5 2v12M9 2v12M13 2v12" stroke="#2a6096" strokeWidth="1.800" /></Tool>
        <Tool name="Time extension"><path d="M1 3l4 5M8 2v12M11 2v12M14 2v12" stroke="#2a6096" strokeWidth="1.800" /></Tool>
        <span className="w-[4px]" />
        <Sep />
        <span className="w-[2px]" />
        <Tool name="Gann fan"><path d="M2 14L9 1M2 14L13 3M2 14l12-8M2 14l13-4" stroke="#2c9050" strokeWidth="1.400" /></Tool>
        <Tool name="Gann grid"><path d="M1 1h14v14H1zM1 6h14M1 10.500h14M6 1v14M10.500 1v14" fill="#dff4e6" stroke="#2c9050" strokeWidth="1.400" /></Tool>
        <span className="w-[4px]" />
        <Sep />
        <span className="w-[4px]" />
        <Tool name="Calculator"><rect x="5" y="1" width="10" height="13" fill="#f0c8ee" stroke="#a02c98" strokeWidth="1.400" /><path d="M7 4h6M7 8h2M11 8h2M7 11h2M11 11h2M0 4h3M0 7h3M0 10h3" stroke="#a02c98" strokeWidth="1.600" /></Tool>
        <Tool name="Text"><path d="M3 3h10M8 3v11M5.500 14h5" stroke="#b050a8" strokeWidth="2.500" /></Tool>
        <Tool name="Rectangle"><rect x="2" y="2" width="12" height="12" fill="#f0d8ee" stroke="#a850a0" strokeWidth="1.600" /></Tool>
        <Tool name="Ellipse"><circle cx="8" cy="8" r="6" fill="#f0d8ee" stroke="#a850a0" strokeWidth="1.600" /></Tool>
        <Tool name="Arc"><path d="M12 2c0 5-2 9-8 12 4-4 5-7 5-11z" fill="#c880c0" stroke="#a850a0" /></Tool>
        <Tool name="Arrow down"><path d="M7 1.500h2v7h4l-5 6-5-6h4z" fill="#f8d0c8" stroke="#c02020" strokeWidth="1.300" /></Tool>
        <Tool name="Arrow up"><path d="M7 14.500h2v-7h4l-5-6-5 6h4z" fill="#cfe4f6" stroke="#2a6096" strokeWidth="1.300" /></Tool>
      </div>
      <div className="flex items-center">
        <Grip />
        <span className="w-[4px]" />
        <Gauge label="TICK" color="#e0206a" />
        <Gauge label="VOL" color="#f08a20" />
        <Gauge label="RNG" color="#2a7ae0" />
        <Badge letter="S" color="#e03c30" menu />
        <Badge letter="M" color="#20a0f0" menu />
        <Badge letter="H" color="#f08020" />
        <Badge letter="D" color="#c02028" />
        <Badge letter="W" color="#8a8410" />
        <Badge letter="M" color="#0e8a60" />
        <Badge letter="Q" color="#1a4f80" />
        <Badge letter="V" color="#484848" />
      </div>
    </div>
  );
}

/* ---------- data window ---------- */

type Row = [string, string?, string?];

const readout: Row[] = [
  ['Cursor:'],
  ['Date', '22-Jan-10', 'text-white'],
  ['Time', '15:25:00', 'text-white'],
  ['Price', '2,875.32', 'text-white'],
  ['FESX MAR 10:'],
  ['O', '2,828.00', 'text-[#00e600]'],
  ['H', '2,830.00', 'text-[#00e600]'],
  ['L', '2,825.00', 'text-[#00e600]'],
  ['C', '2,825.00', 'text-[#00e600]'],
  ['Up Vol', '10,826', 'text-[#00e600]'],
  ['Dn Vol', '0', 'text-[#00e600]'],
  ['BarNumber', '89', 'text-[#00e600]'],
  ['Donchian Channel:'],
  ['DonchianHi', '2,838.00', 'text-[#e60000]'],
  ['DonchianLo', '2,819.00', 'text-[#0000e6]'],
  ['DonchianAvg', '2,828.50', 'text-[#00ffff]'],
];

function DataWindow() {
  return (
    <aside className="flex w-[172px] shrink-0 flex-col border-r-4 border-b-2 border-l-2 border-[#8d8a7c] border-l-[#d8d5c8]">
      <div className="flex h-[20px] items-center border-b-2 border-[#ece9d8] bg-[#aca899] pl-[42px] text-[#7c796c]">
        <span className="flex-1">Data Window</span>
        <button aria-label="Close data window" className="pr-[4px]">
          <svg width="10" height="10" stroke="#66645a" strokeWidth="2"><path d="M1 1l8 8M9 1L1 9" /></svg>
        </button>
      </div>
      <div className="flex-1 bg-black font-['Liberation_Sans',Arial,sans-serif]">
        <table className="w-full border-collapse text-white">
          <tbody>
            {readout.map(([name, value, color]) =>
              value === undefined ? (
                <tr key={name} className="h-[14px] bg-[#404040]">
                  <th colSpan={2} className="p-0 pl-1 text-left leading-[14px] font-normal">{name}</th>
                </tr>
              ) : (
                <tr key={name} className="h-[14px]">
                  <th className="w-[74px] border-r border-b border-[#404040] p-0 pl-1 text-left leading-[13px] font-normal">{name}</th>
                  <td className={`border-b border-[#404040] p-0 pr-1 text-right leading-[13px] ${color}`}>{value}</td>
                </tr>
              )
            )}
          </tbody>
        </table>
      </div>
    </aside>
  );
}

const tabs = ['SOFTS', 'IntraDay Ag', 'IntraDay Main', 'EQUITY', 'RATES', 'METALS', 'GRAINS', 'ENERGY', 'CURRENCY', 'STOCKS', 'PLANNER1', 'PLANNER2'];

function WorkspaceTabs() {
  return (
    <div className="flex h-[17px] border-t border-[#8a8878] bg-linear-to-r from-[#b8b5a2] to-[#dedbcc]">
      <div className="flex w-[62px] items-center justify-between bg-[#ece9d8] px-[4px]">
        {['M7 1v10L2 6zM1 1v10', 'M8 1v10L3 6z', 'M3 1v10l5-5z', 'M3 1v10l5-5zM10 1v10'].map((d, i) => (
          <button key={d} aria-label={['First', 'Previous', 'Next', 'Last'][i]}>
            <svg width="11" height="12"><path d={d} fill="#8f8d80" stroke="#8f8d80" /></svg>
          </button>
        ))}
      </div>
      {tabs.map((t) => {
        const on = t === 'PLANNER1';
        const face = on ? '#ffffff' : '#dcdcd8';
        return (
          <Fragment key={t}>
            <svg className="shrink-0" width="7" height="16"><path d="M0 0h7v16z" fill={face} /><path d="M0 0l7 16" stroke={on ? '#222' : '#8a8878'} /></svg>
            <button className={`leading-[15px] ${on ? 'bg-white px-[3px] font-bold' : 'border-b border-[#9c9a8c] bg-linear-to-b from-[#f4f4f2] to-[#cfcfca] px-[5px]'}`}>{t}</button>
          </Fragment>
        );
      })}
      <svg width="8" height="16"><path d="M0 0h8l-6 16H0z" fill="#dcdcd8" /><path d="M8 0L2 16" stroke="#8a8878" /></svg>
    </div>
  );
}

export default function App() {
  return (
    <div className="min-h-screen bg-white font-['Liberation_Sans',Arial,sans-serif] text-[11px] leading-[14px] text-black">
      <div className="flex bg-[linear-gradient(#00509c,#00509c_94%,#1a8cf0_95%,#1a8cf0_97%,#000_97%)] pl-1">
        <div className="min-w-0 flex-1 bg-[#ece9d8] font-['DejaVu_Sans_Condensed',sans-serif]">
          <header className="flex h-[26px] items-center justify-between bg-[linear-gradient(#3a93ff,#0a5cf0_14%,#0054e3_45%,#0068ff_85%,#0044c8)] pr-[2px] pl-1">
            <div className="flex items-center gap-[4px]">
              <svg width="14" height="16" viewBox="0 0 14 16" aria-hidden="true">
                <path d="M5 1C1 2 0 6 1 9h-1l3.500 5L7 9H5C4 6 4 4 5 1z" fill="#e82010" />
                <path d="M9 15c4-1 5-5 4-8h1l-3.500-5L7 7h2c1 3 1 5 0 8z" fill="#48a8f0" />
              </svg>
              <h1 className="font-['Open_Sans',sans-serif] text-[13px] leading-4 font-semibold text-white">MultiCharts - PLANNER1</h1>
            </div>
            <div className="flex gap-[2px]">
              <button aria-label="Minimize" className="flex h-[21px] w-[21px] items-center justify-center rounded-[3px] border border-white bg-linear-to-br from-[#5b92f8] to-[#1546c8]"><span className="mt-2 mr-1 h-[3px] w-[7px] bg-white" /></button>
              <button aria-label="Restore" className="flex h-[21px] w-[21px] items-center justify-center rounded-[3px] border border-white bg-linear-to-br from-[#5b92f8] to-[#1546c8]">
                <svg width="12" height="12" fill="none" stroke="#fff"><path d="M4.500 4V1.500h6v6H8M1.500 4.500h6v6h-6zM4 2h7M1 5h7" /></svg>
              </button>
              <button aria-label="Close" className="flex h-[21px] w-[21px] items-center justify-center rounded-[3px] border border-white bg-linear-to-br from-[#f0906c] to-[#cc3a10]">
                <svg width="13" height="13" stroke="#fff" strokeWidth="2.200"><path d="M1.500 1.500l10 10M11.500 1.500l-10 10" /></svg>
              </button>
            </div>
          </header>
          <MenuRow />
          <ChartRow />
          <div className="flex">
            <DataWindow />
            <div className="min-w-0 flex-1">
              <main className="border-t border-[#6c6a5c] bg-[#8d8a7c] pr-[2px] font-['Liberation_Sans',Arial,sans-serif]">
                <ChartWindow resolution="5 Minutes" params="(high,low,12,true)" values={[['2,820.00', 'text-[#e60000]'], ['2,801.00', 'text-[#0000e6]'], ['2,810.50', 'text-[#00ffff]']]}>
                  <Plot
                    height={271}
                    axis={256}
                    vertical={[...run(1, 10), ...run(341, 10), ...run(681, 10), ...run(1021, 10), ...run(1361, 6)]}
                    sessions={[338, 676, 1014, 1352]}
                    horizontal={run(33, 6, 41)}
                    labels={fiveMinLabels}
                  >
                    <Lines {...fiveMin} />
                    <path d="M1447 111.500h110M1433 210.500h110" stroke={ORANGE} />
                    <g stroke="none">
                      <Note x={1340} y={76}>A</Note>
                      <Note x={1411} y={87}>get on early, or wait till higher break.</Note>
                      <Note x={1500} y={107}>B</Note>
                      <Note x={1547} y={182}>C</Note>
                      <Note x={1368} y={230}>Look for ABC down to here and then a break up</Note>
                    </g>
                  </Plot>
                  <PriceScale
                    height={271}
                    axis={256}
                    prices={[[33, '2,860.00'], [74, '2,840.00'], [115, '2,820.00'], [156, '2,800.00'], [197, '2,780.00'], [238, '2,760.00']]}
                    tags={[{ y: 146, value: '2,805.00', color: GREEN }]}
                  />
                </ChartWindow>
                <ChartWindow active framed resolution="1 Hour" params="(high,low,3,true)" values={[['2,820.00', 'text-[#e60000]'], ['2,793.00', 'text-[#0000e6]'], ['2,806.50', 'text-[#00ffff]']]}>
                  <Plot
                    height={282}
                    axis={265}
                    vertical={[2, 37, 77, 107, 142, 152, 177, 212, 227, 247, 282, 302, 317, 352, 377, 387, 422, 452, 457, 492, 527, 562, 602, 633, 667, 677, 702, 737, 752, 772, 807, 827, 842, 877, 902, 912, 947, 977, 982, 1017, 1052, 1087, 1122, 1127, 1157, 1192]}
                    sessions={[72, 147, 222, 297, 372, 447, 522, 597, 672, 747, 822, 897, 972, 1047]}
                    horizontal={[33, 71, 108, 146, 183, 221, 258]}
                    labels={hourLabels}
                  >
                    <Lines {...hourly} />
                    <path d="M967 193.500h180" stroke={ORANGE} />
                    <rect x="1063.500" y="238.500" width="247" height="18" fill="#000" stroke="#fff" />
                    <g stroke="none">
                      <Note x={945} y={161}>buy break of third time - go to 5min</Note>
                      <Note x={1064} y={253}>Possible ABC down means corrective</Note>
                    </g>
                  </Plot>
                  <PriceScale
                    height={282}
                    axis={265}
                    prices={[[33, '3,050.00'], [71, '3,000.00'], [108, '2,950.00'], [146, '2,900.00'], [183, '2,850.00'], [221, '2,800.00'], [258, '2,750.00']]}
                    tags={[{ y: 217, value: '2,805.00', color: GREEN }]}
                  />
                </ChartWindow>
                <ChartWindow cut framed resolution="1 Day" params="(high,low,25,false)" values={[['3,044.00', 'text-[#e60000]'], ['2,757.00', 'text-[#0000e6]']]}>
                  <Plot height={280} axis={263} vertical={[58, 265, 445, 643, 841, 1021, 1192, 1381]} horizontal={[50, 77, 103, 130, 157, 184, 211, 238]} labels={dayLabels}>
                    <Lines {...daily} />
                    <path
                      d={dailyBars.map(([h, l, o, c], i) => `M${4.5 + i * 9} ${h}V${l + 1}M${2 + i * 9} ${o + 0.5}h2M${5 + i * 9} ${c + 0.5}h3`).join('')}
                      stroke={GREEN}
                    />
                    <path d="M0 86.500h3000" stroke="#00ffff" />
                    <path d="M310 87.500h10L1525 28M319 90L1551 205" stroke={ORANGE} />
                    <rect x="1265.500" y="119.500" width="267" height="18" fill="#000" stroke="#fff" />
                    <g stroke="none">
                      <text x="0" y="83" fontSize="12" fill="#00ffff">2,863.55</text>
                      <Note x={1266} y={134}>dont want to see a fall below, recent lows</Note>
                    </g>
                  </Plot>
                  <PriceScale
                    height={280}
                    axis={263}
                    prices={[[50, '3,000.00'], [77, '2,900.00'], [103, '2,800.00'], [130, '2,700.00'], [157, '2,600.00'], [184, '2,500.00'], [211, '2,400.00'], [238, '2,300.00'], [265, '2,200.00']]}
                    tags={[{ y: 38, value: '3,044.00', color: RED }, { y: 115, value: '2,757.00', color: BLUE }, { y: 102, value: '2,805.00', color: GREEN }]}
                  />
                </ChartWindow>
              </main>
              <div className="h-[2px] bg-white" />
              <WorkspaceTabs />
            </div>
          </div>
          <DrawingRow />
          <footer className="flex h-[21px] items-center justify-between pl-px">
            <span>Ready</span>
            <div className="flex h-[19px] items-center">
              <span className="mr-1 flex h-full w-[81px] items-center justify-center bg-linear-to-b from-[#7ad87a] to-[#0c7414] text-white">Authorized</span>
              <span className="flex h-full w-[82px] items-center justify-center border-x border-[#c8c5b4]">0 q / 0 s</span>
              <span className="flex h-full w-[56px] items-center justify-center border-r border-[#c8c5b4]">13:36:29</span>
              <span className="w-[31px]" />
            </div>
          </footer>
        </div>
      </div>
    </div>
  );
}
